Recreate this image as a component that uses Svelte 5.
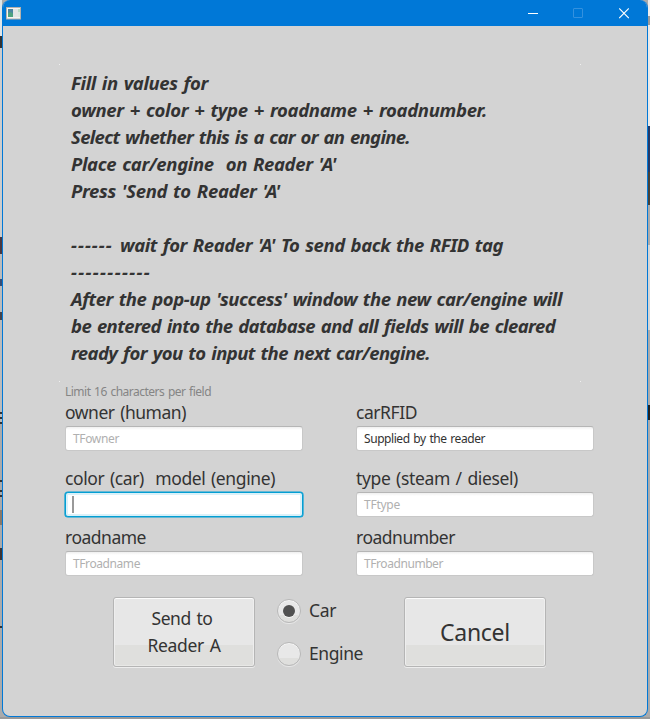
<script>
  const instructions = [
    [['Fill in values for', 137]],
    [['owner + color + type + roadname + roadnumber.', 416]],
    [['Select whether this is a car or an engine.', 339]],
    [["Place car/engine  on Reader 'A'", 265]],
    [["Press 'Send to Reader 'A'", 209]],
    [],
    [['------ ', 49], ["wait for Reader 'A' To send back the RFID tag", 383]],
    [['-----------', 80]],
    [["After the pop-up 'success' window the new car/engine will", 491]],
    [['be entered into the database and all fields will be cleared', 484]],
    [['ready for you to input the next car/engine.', 359]]
  ];

  const rows = [
    [
      { label: 'owner (human)', lw: 121, text: 'TFowner', tw: 46, kind: 'prompt' },
      { label: 'carRFID', lw: 61, text: 'Supplied by the reader', tw: 121, kind: 'value' }
    ],
    [
      { label: 'color (car)  model (engine)', lw: 210, text: '', tw: 0, kind: 'focused' },
      { label: 'type (steam / diesel)', lw: 162, text: 'TFtype', tw: 36, kind: 'prompt' }
    ],
    [
      { label: 'roadname', lw: 81, text: 'TFroadname', tw: 67, kind: 'prompt' },
      { label: 'roadnumber', lw: 99, text: 'TFroadnumber', tw: 79, kind: 'prompt' }
    ]
  ];

  // Tracks a run of text so that it fills the given width.
  function fit(node, width) {
    const count = node.textContent.length;
    if (!count || !width) return;
    const natural = node.getBoundingClientRect().width;
    node.style.letterSpacing = `${(width - natural) / count}px`;
  }
</script>

<div class="desktop">
  <div class="window">
    <header class="titlebar">
      <svg class="app" width="16" height="14" viewBox="0 0 16 14">
        <rect x="0.5" y="0.5" width="14" height="11.5" fill="#f4f4f2" stroke="#b5b2ac" />
        <rect x="2" y="2" width="5" height="8" fill="#4b86a0" />
        <path d="M2 6l3-1 2 2v3H2z" fill="#4fa37f" />
        <rect x="7" y="2" width="5" height="8" fill="#e4e6e6" />
        <rect x="12" y="2" width="2" height="3" fill="#b9dcc4" />
        <rect x="12" y="5" width="2" height="5" fill="#dce8e0" />
      </svg>
      <div class="controls">
        <svg width="10" height="11" viewBox="0 0 10 11"><path d="M0 5.5h10" stroke="#fff" /></svg>
        <svg width="10" height="11" viewBox="0 0 10 11"><rect x="0.5" y="0.5" width="9" height="9" rx="0.5" fill="none" stroke="#3391df" /></svg>
        <svg width="10" height="11" viewBox="0 0 10 11"><path d="M0.2 0.5l9.6 9.6M9.8 0.5L0.2 10.1" stroke="#fff" stroke-width="1.1" /></svg>
      </div>
    </header>

    <main>
      <div class="instructions">
        {#each instructions as parts}
          <div class="line">{#each parts as [text, width]}<span use:fit={width}>{text}</span>{/each}</div>
        {/each}
      </div>

      <div class="limit"><span use:fit={146}>Limit 16 characters per field</span></div>

      <div class="form">
        {#each rows as row}
          <div class="row">
            {#each row as f}
              <div class="field">
                <div class="label"><span use:fit={f.lw}>{f.label}</span></div>
                <div class="input {f.kind}">
                  {#if f.kind === 'focused'}
                    <i class="caret"></i>
                  {:else}
                    <span use:fit={f.tw}>{f.text}</span>
                  {/if}
                </div>
              </div>
            {/each}
          </div>
        {/each}
      </div>

      <div class="actions">
        <div class="button send">
          <span use:fit={61}>Send to</span>
          <span use:fit={73}>Reader A</span>
        </div>
        <div class="radios">
          <div class="option"><i class="radio on"></i><span use:fit={27}>Car</span></div>
          <div class="option"><i class="radio"></i><span use:fit={54}>Engine</span></div>
        </div>
        <div class="button cancel"><span use:fit={70}>Cancel</span></div>
      </div>
    </main>
  </div>
</div>

<style>
  :global(body) { margin: 0; overflow: hidden; }
  .desktop {
    box-sizing: border-box;
    width: 650px;
    height: 719px;
    padding: 0 2px 2px;
    background:
      linear-gradient(#999, #999) 0 717px / 650px 2px no-repeat,
      linear-gradient(#eee 0 16px, #999 16px 25px, #e9e9e9 25px 126px, #243a68 126px 172px, #45423b 172px 205px, #aaa 205px 245px, #d5d5d5 245px 330px, #aaa 330px 405px, #222 405px 420px, #aaa 420px) 648px 0 / 2px 719px no-repeat,
      linear-gradient(#dfe5e8 0 36px, #333 36px 48px, #ccc 48px 237px, #493840 237px 254px, #bbb 254px 279px, #364d75 279px 286px, #bbb 286px 312px, #45434a 312px 320px, #bbb 320px 412px, #333 412px 414px, #bbb 414px 417px, #333 417px 419px, #bbb 419px 422px, #333 422px 424px, #aaa 424px 480px, #333 480px 482px, #aaa 482px 490px, #333 490px 492px, #aaa 492px 495px, #333 495px 497px, #aaa 497px 510px, #8a7968 510px 525px, #aaa 525px 548px, #3c3434 548px 560px, #aaa 560px 626px, #333 626px 628px, #aaa 628px) 0 0 / 2px 719px no-repeat,
      #aaa;
    color: #333;
    font-family: "Noto Sans", "Open Sans", sans-serif;
  }
  .window {
    box-sizing: border-box;
    height: 717px;
    border: 1px solid #0078d7;
    border-top: 0;
    border-radius: 8px;
    overflow: hidden;
    background: #d3d3d3;
  }
  .titlebar {
    display: flex;
    align-items: flex-start;
    justify-content: space-between;
    box-sizing: border-box;
    height: 26px;
    padding: 7px 18px 0 3px;
    background: #0078d7;
  }
  .controls { display: flex; gap: 36px; padding-top: 1px; }
  .controls svg:first-child { margin-right: -1px; }
  .controls svg, .app { display: block; }
  main { padding: 38px 53px 0 62px; }
  span { white-space: pre; }
  .instructions {
    box-sizing: border-box;
    width: 522px;
    height: 318px;
    margin-left: -6px;
    padding: 5px 0 0 12px;
    background:
      linear-gradient(#f0f0f0, #f0f0f0) 0 0 / 1px 1px no-repeat,
      linear-gradient(#f0f0f0, #f0f0f0) 100% 0 / 1px 1px no-repeat,
      linear-gradient(#f0f0f0, #f0f0f0) 0 100% / 1px 1px no-repeat,
      linear-gradient(#f0f0f0, #f0f0f0) 100% 100% / 1px 1px no-repeat;
  }
  .line {
    height: 27px;
    line-height: 27px;
    font-size: 18.5px;
    font-weight: 700;
    font-style: italic;
    word-spacing: 1.5px;
  }
  .limit {
    height: 16px;
    margin-top: 2px;
    line-height: 16px;
    font-size: 12px;
    word-spacing: 1px;
    color: #858585;
  }
  .form { display: flex; flex-direction: column; }
  .row { display: flex; gap: 53px; height: 59px; }
  .row:first-child { height: 66px; }
  .label { height: 24px; line-height: 24px; font-size: 17.5px; word-spacing: 1.5px; }
  .input {
    display: flex;
    align-items: center;
    box-sizing: border-box;
    width: 238px;
    height: 25px;
    margin-top: 2px;
    padding: 0 7px;
    border: 1px solid #c8c8c8;
    border-top-color: #b5b5b5;
    border-radius: 3px;
    background: linear-gradient(#efefef, #fff 3px);
    font-size: 12px;
    word-spacing: 1px;
    color: #b0b0b0;
  }
  .value { color: #323232; }
  .focused {
    border-color: #039ed3;
    background: #fff;
    box-shadow: 0 0 0 0.6px #039ed3, inset 0 0 0 2px #daf1f9;
  }
  .caret { width: 2px; height: 17px; margin-left: -1px; background: #999; }
  .actions { display: flex; padding: 13px 0 0 48px; }
  .button {
    display: flex;
    flex-direction: column;
    align-items: center;
    justify-content: center;
    box-sizing: border-box;
    width: 142px;
    height: 70px;
    border: 1px solid #b5b5b5;
    border-radius: 3px;
    background: linear-gradient(#e7e7e7 0 69%, #dfdfdd 69%);
    box-shadow: 0 1px #ededed, inset 0 1px #fcfcfc, inset 1px 0 #eee, inset -1px 0 #eee, inset 0 -1px #e8e8e6;
  }
  .send { padding-bottom: 1px; font-size: 17.5px; line-height: 27px; word-spacing: 1.5px; }
  .send span:first-child { margin-right: 4px; }
  .cancel { font-size: 23px; line-height: 32px; }
  .radios {
    display: flex;
    flex-direction: column;
    gap: 19px;
    width: 127px;
    padding: 2px 0 0 22px;
  }
  .option { display: flex; align-items: center; gap: 8px; height: 24px; font-size: 17.5px; line-height: 24px; }
  .option span { padding-bottom: 2px; }
  .radio {
    display: flex;
    align-items: center;
    justify-content: center;
    box-sizing: border-box;
    width: 24px;
    height: 24px;
    border: 1px solid #b8b8b8;
    border-radius: 50%;
    background: linear-gradient(#e8e8e8 0 67%, #dfdfdd 67%);
    box-shadow: 0 1px #e8e8e8, inset 0 1px #f6f6f6;
  }
  .on::after { content: ''; width: 12px; height: 12px; border-radius: 50%; background: #515151; box-shadow: 0 1px #f5f5f5; }
</style>
